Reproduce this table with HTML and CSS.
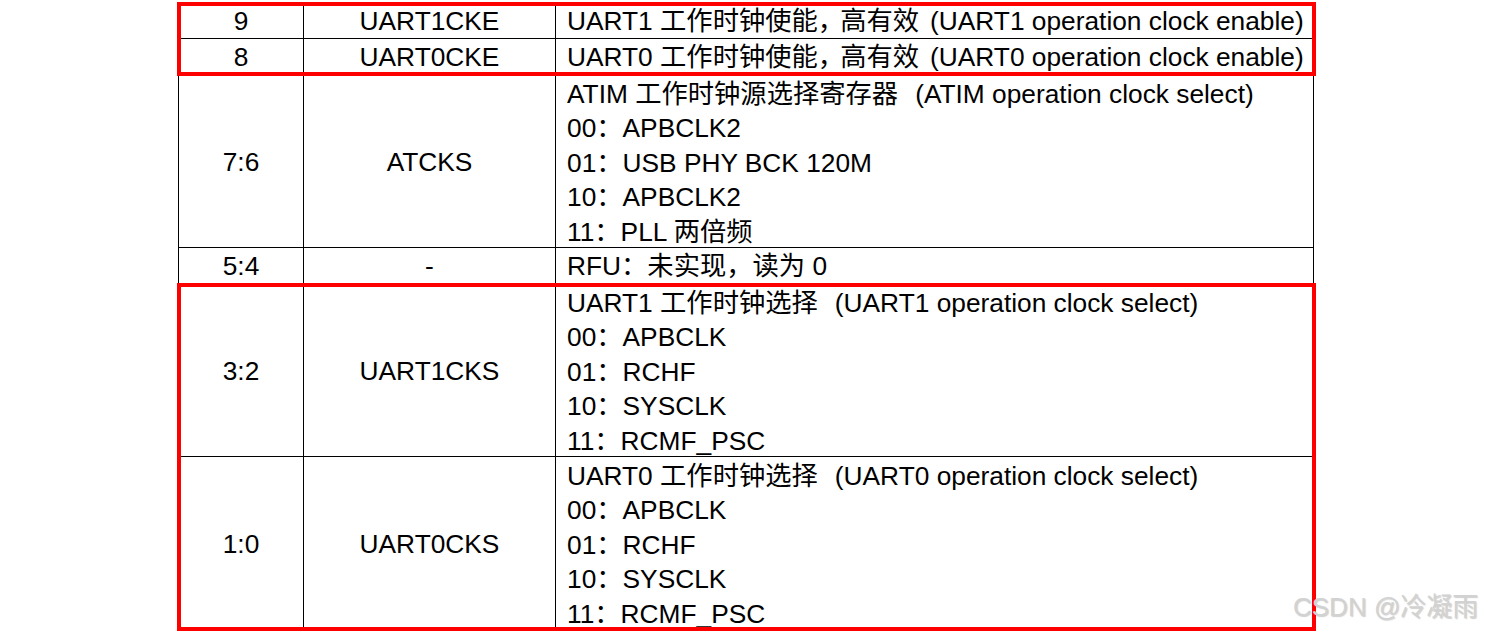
FILE: index.html
```html
<!DOCTYPE html>
<html lang="zh-CN">
<head>
<meta charset="utf-8">
<link rel="stylesheet" href="styles.css">
</head>
<body>
<div class="page">
  <div class="table">
    <div class="group">
      <div class="row single">
        <div class="cell c1">9</div>
        <div class="cell c2">UART1CKE</div>
        <div class="cell c3"><div>UART1 工作时钟使能<span class="cm">，</span>高有效<span class="en tight">(UART1 operation clock enable)</span></div></div>
      </div>
      <div class="row single">
        <div class="cell c1">8</div>
        <div class="cell c2">UART0CKE</div>
        <div class="cell c3"><div>UART0 工作时钟使能<span class="cm">，</span>高有效<span class="en tight">(UART0 operation clock enable)</span></div></div>
      </div>
    </div>
    <div class="row multi">
      <div class="cell c1">7:6</div>
      <div class="cell c2">ATCKS</div>
      <div class="cell c3">
        <div>ATIM 工作时钟源选择寄存器<span class="en">(ATIM operation clock select)</span></div>
        <div>00：APBCLK2</div>
        <div>01：USB PHY BCK 120M</div>
        <div>10：APBCLK2</div>
        <div>11：PLL 两倍频</div>
      </div>
    </div>
    <div class="row single">
      <div class="cell c1">5:4</div>
      <div class="cell c2">-</div>
      <div class="cell c3"><div>RFU：未实现，读为 0</div></div>
    </div>
    <div class="group">
      <div class="row multi">
        <div class="cell c1">3:2</div>
        <div class="cell c2">UART1CKS</div>
        <div class="cell c3">
          <div>UART1 工作时钟选择<span class="en">(UART1 operation clock select)</span></div>
          <div>00：APBCLK</div>
          <div>01：RCHF</div>
          <div>10：SYSCLK</div>
          <div>11：RCMF_PSC</div>
        </div>
      </div>
      <div class="row multi">
        <div class="cell c1">1:0</div>
        <div class="cell c2">UART0CKS</div>
        <div class="cell c3">
          <div>UART0 工作时钟选择<span class="en">(UART0 operation clock select)</span></div>
          <div>00：APBCLK</div>
          <div>01：RCHF</div>
          <div>10：SYSCLK</div>
          <div>11：RCMF_PSC</div>
        </div>
      </div>
    </div>
  </div>
  <div class="watermark">CSDN @冷凝雨</div>
</div>
</body>
</html>
```
FILE: styles.css
```css
html, body {
  margin: 0;
  padding: 0;
  background: #ffffff;
}
body {
  width: 1490px;
  height: 634px;
  overflow: hidden;
  font-family: "Liberation Sans", Arial, "Noto Sans CJK SC", sans-serif;
  font-size: 26.3px;
  color: #000;
}
.page {
  position: relative;
  width: 1490px;
  height: 634px;
  padding-top: 2px;
  box-sizing: border-box;
}
.table {
  margin-left: 178px;
  width: 1137px;
  border-top: 1px solid #000;
  border-left: 1px solid #000;
  box-sizing: border-box;
  display: flex;
  flex-direction: column;
}
.group {
  display: flex;
  flex-direction: column;
  outline: 4px solid #ff0000;
  outline-offset: -3px;
  position: relative;
  z-index: 1;
  margin-left: -1px;
  padding-left: 1px;
}
.row {
  display: grid;
  grid-template-columns: 125px 252px 758px;
}
.cell {
  box-sizing: border-box;
  border-right: 1px solid #000;
  border-bottom: 1px solid #000;
  padding-top: 2px;
  line-height: 34.4px;
  display: flex;
  flex-direction: column;
  justify-content: center;
}
.row.single .cell {
  height: 36px;
}
.row.multi .cell {
  height: 173px;
}
.row.multi .c3 {
  justify-content: flex-start;
}
.c1, .c2 {
  align-items: center;
  text-align: center;
}
.c3 {
  padding-left: 11px;
  white-space: nowrap;
}
.cm {
  letter-spacing: -4px;
}
.en {
  margin-left: 17px;
}
.en.tight {
  margin-left: 11px;
}
.watermark {
  position: absolute;
  left: 1293px;
  top: 591px;
  font-size: 26px;
  line-height: 32px;
  color: #d2d2d2;
  text-shadow: 1px 1px 1px rgba(120, 120, 120, 0.35);
  white-space: nowrap;
  z-index: 2;
}
```
